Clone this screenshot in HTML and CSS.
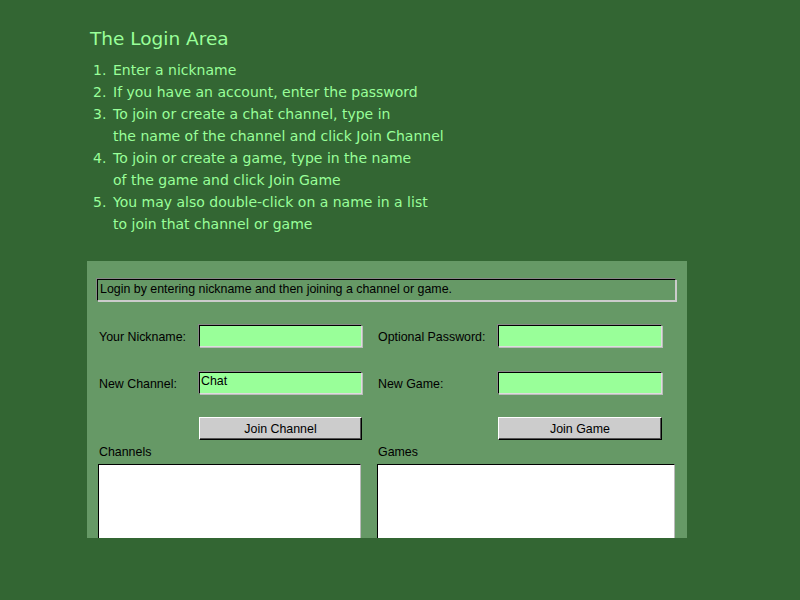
FILE: index.html
```html
<!DOCTYPE html>
<html>
<head>
<meta charset="utf-8">
<link rel="stylesheet" href="styles.css">
</head>
<body>
<div class="intro">
  <h1 class="title">The Login Area</h1>
  <ol class="steps">
    <li><span class="num">1.</span><span>Enter a nickname</span></li>
    <li><span class="num">2.</span><span>If you have an account, enter the password</span></li>
    <li><span class="num">3.</span><span>To join or create a chat channel, type in<br>the name of the channel and click Join Channel</span></li>
    <li><span class="num">4.</span><span>To join or create a game, type in the name<br>of the game and click Join Game</span></li>
    <li><span class="num">5.</span><span>You may also double-click on a name in a list<br>to join that channel or game</span></li>
  </ol>
</div>
<div class="panel">
  <div class="status">Login by entering nickname and then joining a channel or game.</div>
  <div class="row row-first">
    <label class="lbl lbl-left">Your Nickname:</label>
    <div class="field field-left"></div>
    <label class="lbl lbl-right">Optional Password:</label>
    <div class="field field-right"></div>
  </div>
  <div class="row row-second">
    <label class="lbl lbl-left">New Channel:</label>
    <div class="field field-left">Chat</div>
    <label class="lbl lbl-right">New Game:</label>
    <div class="field field-right"></div>
  </div>
  <div class="row row-buttons">
    <div class="lbl lbl-left"></div>
    <div class="btn field-left">Join Channel</div>
    <div class="lbl lbl-right"></div>
    <div class="btn field-right">Join Game</div>
  </div>
  <div class="lists">
    <div class="listcol listcol-left">
      <div class="listlbl">Channels</div>
      <div class="listbox"></div>
    </div>
    <div class="listcol listcol-right">
      <div class="listlbl">Games</div>
      <div class="listbox"></div>
    </div>
  </div>
</div>
</body>
</html>
```
FILE: styles.css
```css
html, body {
  margin: 0;
  padding: 0;
  background: #336633;
  height: 100%;
}
body {
  font-family: "DejaVu Sans", sans-serif;
}
.intro {
  padding: 27px 0 0 90px;
  color: #99ff99;
}
.title {
  margin: 0;
  font-size: 18.5px;
  font-weight: normal;
  line-height: 24px;
}
.steps {
  list-style: none;
  margin: 8px 0 0 3px;
  padding: 0;
  font-size: 14px;
  line-height: 22px;
}
.steps li {
  display: flex;
}
.num {
  width: 20px;
  flex: none;
}
.panel {
  margin: 26px 0 0 87px;
  width: 600px;
  height: 277px;
  background: #669966;
  overflow: hidden;
  padding-top: 18px;
  box-sizing: border-box;
  font-family: "Liberation Sans", Arial, sans-serif;
  font-size: 12.4px;
  color: #000;
}
.status {
  margin-left: 10px;
  width: 579px;
  height: 22px;
  box-sizing: border-box;
  border: 1px solid;
  border-color: #000 #cccccc #cccccc #000;
  box-shadow: -1px -1px 0 #888888, 1px 1px 0 #cccccc;
  line-height: 19px;
  padding-left: 2px;
}
.row {
  display: flex;
  align-items: center;
  padding-left: 11px;
}
.row-first { margin-top: 24px; height: 22px; }
.row-second { margin-top: 25px; height: 22px; }
.row-buttons { margin-top: 23px; height: 23px; }
.lbl {
  padding-left: 1px;
  padding-top: 2px;
  box-sizing: border-box;
}
.lbl-left { width: 101px; }
.lbl-right { width: 121px; margin-left: 15px; }
.field {
  height: 22px;
  box-sizing: border-box;
  background: #99ff99;
  border: 1px solid;
  border-color: #000 #dddddd #dddddd #000;
  box-shadow: -1px -1px 0 #888888, 1px 1px 0 #bbbbbb;
  padding-left: 1px;
  line-height: 16px;
}
.field-left { width: 163px; }
.field-right { width: 164px; }
.btn {
  height: 23px;
  box-sizing: border-box;
  background: #cccccc;
  border: 1px solid;
  border-color: #ffffff #000 #000 #ffffff;
  box-shadow: inset -1px -1px 0 #555555;
  text-align: center;
  line-height: 22px;
}
.lists {
  display: flex;
  padding-left: 11px;
}
.listcol-left { width: 263px; }
.listcol-right { width: 298px; margin-left: 16px; }
.listlbl {
  height: 24px;
  line-height: 24px;
  padding-left: 1px;
}
.listbox {
  height: 120px;
  background: #ffffff;
  border: 1px solid;
  border-color: #000 #bbbbbb #bbbbbb #000;
  box-sizing: border-box;
}
```
